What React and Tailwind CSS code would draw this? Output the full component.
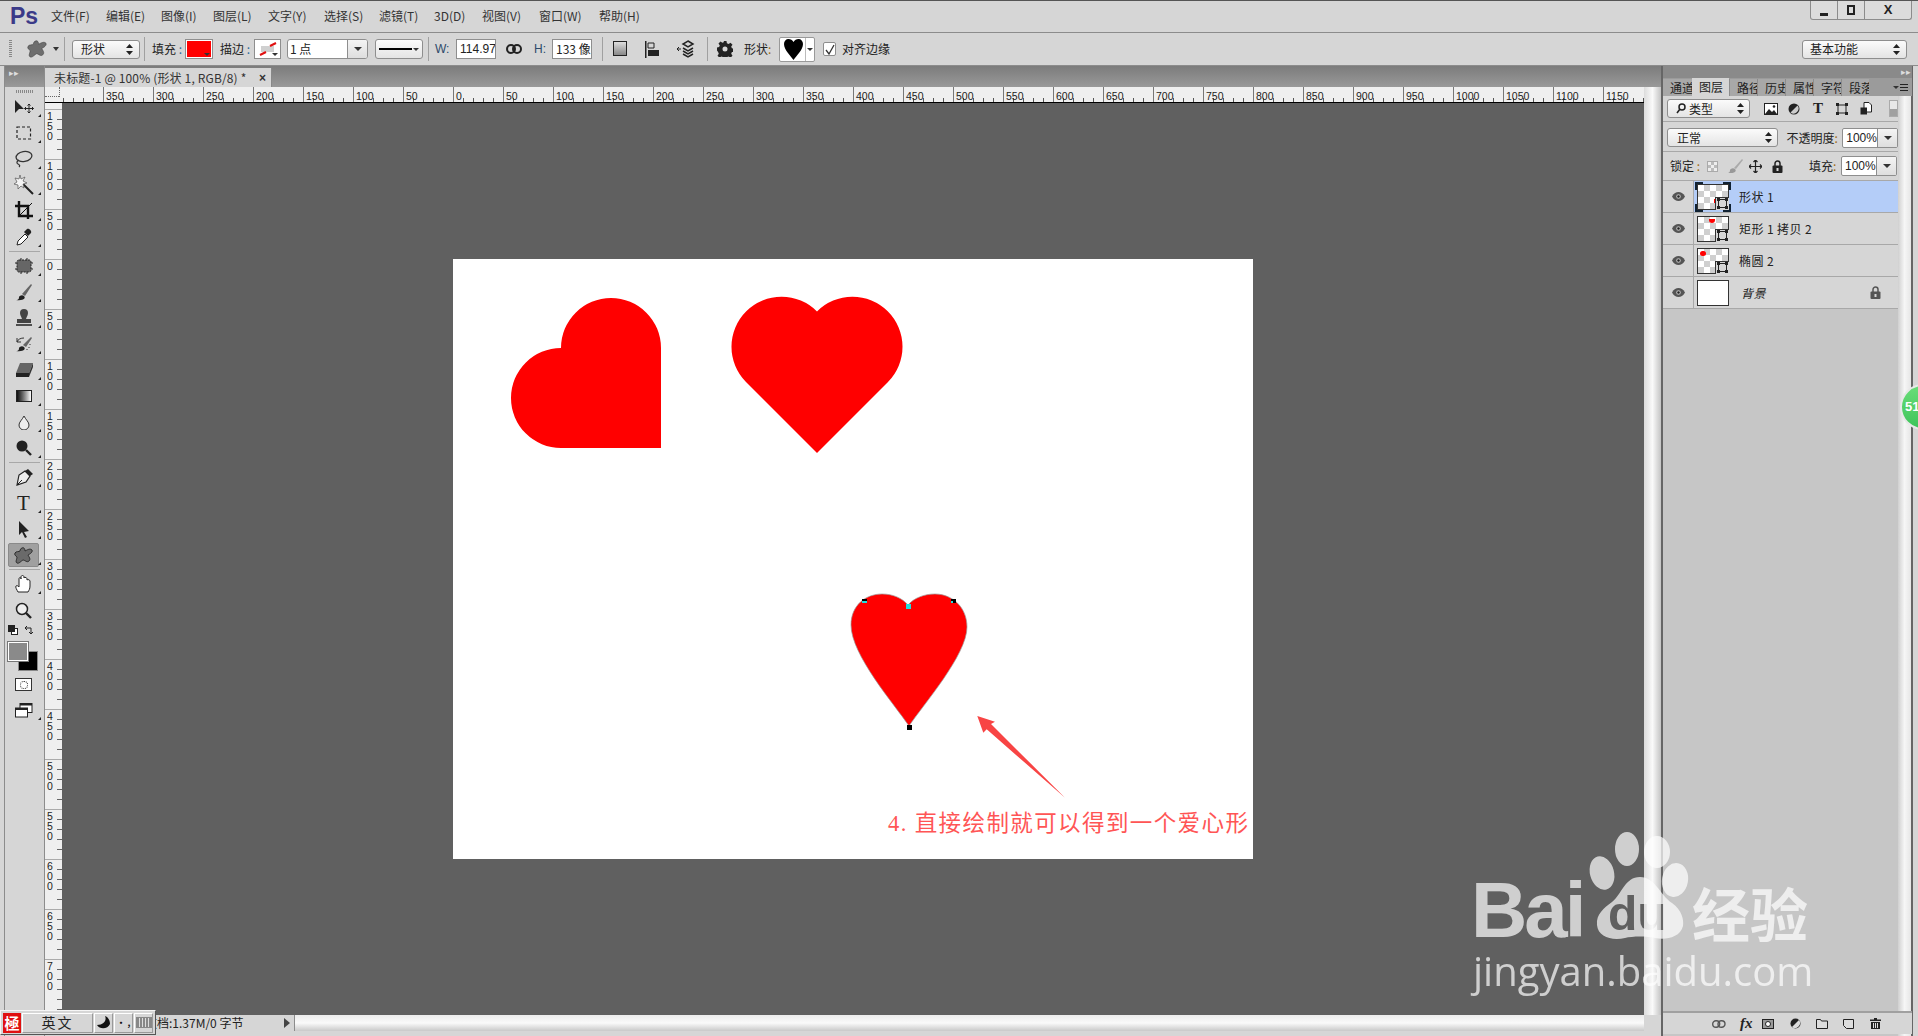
const cjk = "font-['Noto_Sans_CJK_SC','Noto_Sans',sans-serif]";

const menus = [
  ["文件(F)", "w-[55px]"],
  ["编辑(E)", "w-[55px]"],
  ["图像(I)", "w-[52px]"],
  ["图层(L)", "w-[55px]"],
  ["文字(Y)", "w-[56px]"],
  ["选择(S)", "w-[55px]"],
  ["滤镜(T)", "w-[55px]"],
  ["3D(D)", "w-[48px]"],
  ["视图(V)", "w-[57px]"],
  ["窗口(W)", "w-[60px]"],
  ["帮助(H)", "w-[60px]"],
];

const shapePath =
  "M8 1C10 0 11 2 11 4C13 3 16 1 18 3C19 5 16 7 14 8C15 10 17 12 15 14C13 16 11 13 9 13C7 14 5 17 3 16C1 15 3 12 3 10C2 9 0 8 1 6C2 4 5 5 6 4C6 3 7 1 8 1Z";

function Caret({ className = "" }) {
  return <div className={`w-0 h-0 border-l-[3px] border-r-[3px] border-t-[3px] border-l-transparent border-r-transparent border-t-[#333] ${className}`} />;
}

function Sep() {
  return <div className="w-px h-[24px] bg-[#a0a0a0]" />;
}

function UpDown() {
  return (
    <svg width="7" height="11" viewBox="0 0 7 11" fill="#222">
      <path d="M3.500 0 7 4H0zM3.500 11 0 7h7z" />
    </svg>
  );
}

function Select({ label, className = "", pad = "pl-[8px]" }) {
  return (
    <div className={`h-[19px] flex items-center justify-between ${pad} pr-[6px] rounded-[3px] border border-[#8e8e8e] bg-gradient-to-b from-[#fbfbfb] to-[#e4e4e4] text-[12px] text-[#222] ${className}`}>
      <span>{label}</span>
      <UpDown />
    </div>
  );
}

function Field({ value, className = "" }) {
  return <div className={`h-[20px] flex items-center px-[3px] bg-white border border-[#8e8e8e] text-[12px] text-[#222] overflow-hidden whitespace-nowrap ${className}`}>{value}</div>;
}

function TitleBar() {
  return (
    <div className="h-[33px] shrink-0 flex items-start border-t border-t-[#555] border-b border-b-[#8c8c8c] bg-[#d6d6d6] relative">
      <div className="ml-[10px] mt-[1px] w-[41px] font-['Liberation_Sans',sans-serif] font-bold text-[23px] leading-[28px] text-[#3b3a88]">Ps</div>
      <div className="flex mt-[6px] text-[12px] leading-[18px] text-[#333]">
        {menus.map(([label, w]) => (
          <div key={label} className={w}>{label}</div>
        ))}
      </div>
      <div className="ml-auto mr-[6px] w-[102px] h-[19px] flex border border-t-0 border-[#8c8c8c] rounded-b-[3px] bg-[#dcdcdc]">
        <div className="w-[27px] flex items-end justify-center pb-[3px] border-r border-[#8c8c8c]">
          <div className="w-[8px] h-[3px] bg-[#222]" />
        </div>
        <div className="w-[27px] flex items-center justify-center border-r border-[#8c8c8c]">
          <div className="w-[8px] h-[10px] border-2 border-[#222]" />
        </div>
        <div className="flex-1 flex items-center justify-center font-['Liberation_Sans',sans-serif] font-bold text-[13px] text-[#222]">X</div>
      </div>
    </div>
  );
}

function OptionsBar() {
  return (
    <div className="h-[33px] shrink-0 flex items-center border-b border-[#8c8c8c] bg-[#d6d6d6] text-[12px] text-[#222]">
      <div className="ml-[9px] w-[3px] h-[18px] bg-[repeating-linear-gradient(to_bottom,#888_0,#888_1px,transparent_1px,transparent_2px)]" />
      <svg className="ml-[15px]" width="20" height="18" viewBox="0 0 19 17" fill="#6e6e6e" stroke="#444" strokeWidth=".6">
        <path d={shapePath} />
      </svg>
      <Caret className="ml-[6px] !border-t-[4px]" />
      <div className="ml-[5px]"><Sep /></div>
      <Select label="形状" className="ml-[7px] w-[68px]" />
      <div className="ml-[4px]"><Sep /></div>
      <div className="ml-[7px] w-[32px]">填充<span className="text-[#2b6a9a]"> :</span></div>
      <div className="ml-[1px] w-[28px] h-[20px] p-[1px] bg-white border border-[#8e8e8e] relative">
        <div className="w-full h-full bg-[#ff0000]" />
        <Caret className="absolute right-[2px] bottom-[2px]" />
      </div>
      <div className="ml-[7px] w-[33px]">描边<span className="text-[#2b6a9a]"> :</span></div>
      <div className="ml-[1px] w-[27px] h-[20px] bg-white border border-[#8e8e8e] relative flex items-center justify-center">
        <svg width="20" height="14" viewBox="0 0 20 14">
          <rect x="3" y="4" width="13" height="6" fill="#d0d0d0" />
          <path d="M2 13 8 10M12 4l6-3" stroke="#e01010" strokeWidth="2" />
        </svg>
        <Caret className="absolute right-[2px] bottom-[2px]" />
      </div>
      <div className="ml-[6px] w-[81px] h-[20px] flex rounded-[3px] border border-[#8e8e8e] bg-white overflow-hidden">
        <div className="flex-1 flex items-center pl-[2px]">1 点</div>
        <div className="w-[20px] flex items-center justify-center border-l border-[#8e8e8e] bg-gradient-to-b from-[#f4f4f4] to-[#dedede]">
          <Caret className="!border-l-[4px] !border-r-[4px] !border-t-[4px]" />
        </div>
      </div>
      <div className="ml-[7px] w-[48px] h-[20px] flex items-center justify-between px-[3px] rounded-[3px] border border-[#8e8e8e] bg-gradient-to-b from-[#fbfbfb] to-[#e4e4e4]">
        <div className="w-[33px] h-[2px] bg-black" />
        <Caret />
      </div>
      <div className="ml-[5px]"><Sep /></div>
      <div className="ml-[6px] w-[21px] font-['Liberation_Sans',sans-serif] text-[#2d4a6a]">W:</div>
      <Field value="114.97" className="w-[40px] font-['Liberation_Sans',sans-serif]" />
      <svg className="ml-[10px]" width="16" height="10" viewBox="0 0 16 10" fill="none" stroke="#222" strokeWidth="2">
        <rect x="1" y="1" width="8" height="8" rx="4" />
        <rect x="7" y="1" width="8" height="8" rx="4" />
      </svg>
      <div className="ml-[12px] w-[18px] font-['Liberation_Sans',sans-serif] text-[#2d4a6a]">H:</div>
      <Field value="133 像素" className="w-[40px]" />
      <div className="ml-[10px]"><Sep /></div>
      <div className="ml-[10px] w-[14px] h-[15px] border border-[#222] bg-gradient-to-b from-[#ddd] to-[#888] mb-[2px]" />
      <svg className="ml-[18px]" width="15" height="17" viewBox="0 0 15 17" fill="#222">
        <path d="M0 0h1.500v17H0z" />
        <path d="M3 2h6v5H3z" fill="none" stroke="#222" />
        <path d="M3 9h11v6H3z" />
      </svg>
      <svg className="ml-[15px]" width="20" height="18" viewBox="0 0 20 18" fill="none" stroke="#222" strokeWidth="1.500">
        <path d="M2 9h4M4 7 2 9l2 2" strokeWidth="1" />
        <path d="m13 1 5 3-5 3-5-3zM8 8l5 3 5-3M8 11l5 3 5-3M8 14l5 3 5-3" />
      </svg>
      <div className="ml-[12px]"><Sep /></div>
      <svg className="ml-[9px]" width="16" height="16" viewBox="0 0 16 16" fill="#222">
        <path fillRule="evenodd" d="M6.500 0h3l.4 2.300 1.700.7 1.900-1.300 2 2-1.300 1.900.7 1.700 2.100.4v3l-2.100.4-.7 1.700 1.300 1.900-2 2-1.900-1.300-1.700.7-.4 2.300h-3l-.4-2.300-1.700-.7-1.900 1.300-2-2 1.300-1.900-.7-1.700L0 9.500v-3l2.100-.4.7-1.700L1.500 2.500l2-2 1.900 1.300 1.700-.7zM8 5.500a2.500 2.500 0 1 0 0 5 2.500 2.500 0 0 0 0-5z" />
      </svg>
      <div className="ml-[11px] w-[35px]">形状<span className="text-[#a06a10]">:</span></div>
      <div className="w-[36px] h-[25px] flex items-center rounded-[2px] border border-[#999] bg-white relative">
        <svg className="ml-[4px]" width="19" height="21" viewBox="0 0 19 21" fill="#000">
          <path d="M9.500 21C7 17 0 11 0 5c0-3 2-5 4.500-5 2 0 4 1 5 3 1-2 3-3 5-3C17 0 19 2 19 5c0 6-7 12-9.500 16z" />
        </svg>
        <div className="absolute right-0 top-0 bottom-0 w-[9px] flex items-center justify-center border-l border-[#bbb]">
          <Caret />
        </div>
      </div>
      <div className="ml-[8px] w-[13px] h-[14px] rounded-[2px] border border-[#8e8e8e] bg-white flex items-center justify-center">
        <svg width="10" height="11" viewBox="0 0 10 11" fill="none" stroke="#333" strokeWidth="1.300"><path d="M1 6l3 4 5-9" /></svg>
      </div>
      <div className="ml-[6px]">对齐边缘</div>
      <Select label="基本功能" pad="pl-[7px]" className="ml-auto mr-[11px] w-[105px]" />
    </div>
  );
}

function Tool({ children, corner = true, active = false }) {
  return (
    <div className="h-[26px] flex items-center justify-center pr-[2px] relative">
      {active && <div className="absolute left-[3px] top-[1px] w-[31px] h-[24px] rounded-[2px] bg-[#a0a0a0] border border-[#8a8a8a]" />}
      <div className="relative flex items-center justify-center">{children}</div>
      {corner && <div className="absolute right-[3px] bottom-[3px] w-0 h-0 border-l-[3px] border-l-transparent border-b-[3px] border-b-[#222]" />}
    </div>
  );
}

function ToolDivider() {
  return (
    <div className="h-[3px] flex items-center px-[4px]">
      <div className="w-full h-px bg-[#a8a8a8]" />
    </div>
  );
}

function Icon({ w = 20, h = 20, children, ...rest }) {
  return (
    <svg width={w} height={h} viewBox={`0 0 ${w} ${h}`} {...rest}>
      {children}
    </svg>
  );
}

function ToolBar() {
  return (
    <div className="w-[41px] ml-[4px] shrink-0 flex flex-col border-x border-[#8c8c8c] bg-[#d6d6d6]">
      <div className="h-[21px] bg-gradient-to-b from-[#7c7c7c] to-[#999] text-[#ddd] text-[9px] leading-[14px] pl-[4px] font-['Liberation_Sans',sans-serif]">▸▸</div>
      <div className="h-[7px] flex justify-center pt-[3px]">
        <div className="w-[18px] h-[3px] bg-[repeating-linear-gradient(to_right,#888_0,#888_1px,transparent_1px,transparent_2px)]" />
      </div>
      <Tool>
        <Icon w={24} h={16}>
          <path d="M3 1v13l4-4 5 0z" fill="#222" />
          <path d="M17 5v9M12.500 9.500h9M15.500 6.500 17 5l1.500 1.500M15.500 12.500 17 14l1.500-1.500M14 8l-1.500 1.500L14 11M20 8l1.500 1.500L20 11" fill="none" stroke="#222" />
        </Icon>
      </Tool>
      <Tool>
        <Icon w={16} h={14}>
          <rect x="1" y="1" width="13.500" height="12" fill="none" stroke="#222" strokeWidth="1.200" strokeDasharray="3 2" />
        </Icon>
      </Tool>
      <Tool>
        <Icon w={19} h={18} fill="none" stroke="#333" strokeWidth="1.300">
          <ellipse cx="10" cy="6.500" rx="8" ry="5" transform="rotate(-10 10 6.500)" />
          <path d="M5 10c-2 1-3 3-1 4s2 2 1 3" />
        </Icon>
      </Tool>
      <Tool>
        <Icon w={20} h={20}>
          <path d="M9 9l10 10" stroke="#222" strokeWidth="2" />
          <path d="M6 0l1 4 4-2-2 4 4 2-4 1 1 4-3-2-3 3 0-4-4-1 3-2-2-4 4 1z" fill="#f4f4f4" stroke="#555" strokeWidth=".7" />
        </Icon>
      </Tool>
      <Tool>
        <Icon w={20} h={20} fill="none" stroke="#111">
          <path d="M1 5h13v13M5 0v15h14" strokeWidth="2.400" />
          <path d="M6 14 18 2" strokeWidth="1" />
        </Icon>
      </Tool>
      <Tool>
        <Icon w={16} h={18}>
          <path d="M1 17l1-4 7-7 3 3-7 7z" fill="#fff" stroke="#222" />
          <path d="M8 4l4 4 3-3c1-2-2-5-4-4z" fill="#222" />
        </Icon>
      </Tool>
      <ToolDivider />
      <Tool>
        <Icon w={18} h={16}>
          <rect x="2" y="2" width="14" height="12" rx="2" fill="#666" stroke="#222" strokeDasharray="2 1" />
          <path d="M0 5h2M0 11h2M16 5h2M16 11h2M6 0v2M12 0v2M6 14v2M12 14v2" stroke="#222" />
        </Icon>
      </Tool>
      <Tool>
        <Icon w={18} h={18}>
          <path d="M7 11 16 1l1 1-7 11z" fill="#666" />
          <path d="M1 17c3 0 3-2 3-3s3-3 5-1 0 5-8 4z" fill="#222" />
        </Icon>
      </Tool>
      <Tool>
        <Icon w={16} h={18}>
          <path d="M6 10c-1-3-2-4-2-6a4 4 0 0 1 8 0c0 2-1 3-2 6z" fill="#444" />
          <path d="M1 10h14v4H1z" fill="#444" />
          <path d="M0 16h16" stroke="#222" strokeWidth="1.500" />
        </Icon>
      </Tool>
      <Tool>
        <Icon w={18} h={16}>
          <path d="M8 9 16 1l1 1-6 9z" fill="#666" />
          <path d="M1 15c3 0 3-2 3-3s3-3 5-1 0 5-8 4z" fill="#222" />
          <path d="M2 6c1-3 4-4 7-4M2 2v4h4" fill="none" stroke="#333" />
          <path d="M15 8v1M14 11v1M12 13v1" stroke="#333" />
        </Icon>
      </Tool>
      <Tool>
        <Icon w={18} h={14}>
          <path d="M5 0h13l-4 10H1z" fill="#666" />
          <path d="M1 10h13v4H1z" fill="#222" />
          <path d="M14 10l4-10v4l-4 10z" fill="#333" />
        </Icon>
      </Tool>
      <Tool>
        <div className="w-[16px] h-[12px] border border-[#222] bg-gradient-to-r from-[#111] to-[#fff]" />
      </Tool>
      <Tool>
        <Icon w={12} h={15}>
          <path d="M6 1C4 5 1 7 1 10a5 5 0 0 0 10 0c0-3-3-5-5-9z" fill="#eee" stroke="#333" />
        </Icon>
      </Tool>
      <Tool>
        <Icon w={16} h={16}>
          <circle cx="6" cy="6" r="5.500" fill="#222" />
          <path d="M10 10l5 5" stroke="#222" strokeWidth="2.400" />
        </Icon>
      </Tool>
      <ToolDivider />
      <Tool>
        <Icon w={18} h={17}>
          <path d="M2 16 4 6l6-4 5 5-4 6z" fill="#eee" stroke="#222" strokeWidth="1.200" />
          <path d="M10 2l3-2 5 5-3 2z" fill="#222" />
          <path d="M2 16l5-5" stroke="#222" />
        </Icon>
      </Tool>
      <Tool>
        <div className="font-['Liberation_Serif',serif] text-[21px] leading-[20px] text-[#222]">T</div>
      </Tool>
      <Tool>
        <Icon w={12} h={17}>
          <path d="M1 0v14l3-3 3 6 2-1-3-5 5-1z" fill="#222" />
        </Icon>
      </Tool>
      <Tool active>
        <svg width="19" height="17" viewBox="0 0 19 17" fill="#6a6a6a" stroke="#222" strokeWidth=".9">
          <path d={shapePath} />
        </svg>
      </Tool>
      <ToolDivider />
      <Tool>
        <Icon w={18} h={18}>
          <path d="M3 17c-1-2-3-5-2-6s2 0 3 1V4c0-2 2-2 2 0V2c0-2 3-2 3 0v1c0-1 3-1 3 1v1c1-1 3 0 3 1v5c0 3-1 4-2 6z" fill="#fff" stroke="#222" />
        </Icon>
      </Tool>
      <Tool corner={false}>
        <Icon w={17} h={17}>
          <circle cx="7" cy="7" r="5.500" fill="#eee" stroke="#222" strokeWidth="1.500" />
          <path d="M11 11l5 5" stroke="#222" strokeWidth="2.400" />
        </Icon>
      </Tool>
      <div className="h-[14px] flex justify-between items-center pl-[3px] pr-[10px]">
        <div className="relative w-[10px] h-[10px]">
          <div className="absolute right-0 bottom-0 w-[7px] h-[7px] bg-white border border-[#222]" />
          <div className="absolute left-0 top-0 w-[7px] h-[7px] bg-[#222]" />
        </div>
        <Icon w={10} h={10} fill="none" stroke="#222">
          <path d="M1 3h6v6M1 3l2-2M1 3l2 2M7 9l-2-2M7 9l2-2" />
        </Icon>
      </div>
      <div className="mt-[5px] h-[28px] relative">
        <div className="absolute left-[13px] top-[9px] w-[20px] h-[20px] bg-black border border-[#888]" />
        <div className="absolute left-[3px] top-0 w-[20px] h-[19px] bg-[#8a8a8a] border border-white outline outline-[#777]" />
      </div>
      <div className="mt-[8px] flex justify-center pr-[2px]">
        <div className="w-[17px] h-[13px] bg-white border border-[#333] flex items-center justify-center">
          <div className="w-[8px] h-[8px] rounded-full border border-dotted border-[#222]" />
        </div>
      </div>
      <div className="mt-[12px] h-[18px] flex justify-center pr-[2px] relative">
        <Icon w={18} h={15}>
          <rect x="5" y="0.500" width="12" height="9" fill="#fff" stroke="#222" />
          <path d="M5 0.500h12v2H5z" fill="#222" />
          <rect x="0.500" y="5" width="12" height="9" fill="#fff" stroke="#222" />
          <path d="M0.500 5h12v2H.5z" fill="#222" />
        </Icon>
        <div className="absolute right-[3px] bottom-[1px] w-0 h-0 border-l-[3px] border-l-transparent border-b-[3px] border-b-[#222]" />
      </div>
    </div>
  );
}

function HRuler() {
  const labels = [350, 300, 250, 200, 150, 100, 50, 0, 50, 100, 150, 200, 250, 300, 350, 400, 450, 500, 550, 600, 650, 700, 750, 800, 850, 900, 950, 1000, 1050, 1100, 1150];
  const ticks = [];
  for (let x = 1; x < 1582; x += 10) ticks.push(x);
  return (
    <svg width="1582" height="15" className="block">
      <rect width="1582" height="15" fill="#efefef" />
      {ticks.map((x) => (
        <line key={x} x1={x + 0.5} x2={x + 0.5} y1="11" y2="15" stroke="#555" />
      ))}
      {labels.map((v, i) => (
        <g key={i}>
          <line x1={41.5 + i * 50} x2={41.5 + i * 50} y1="0" y2="15" stroke="#777" />
          <text x={44 + i * 50} y="12.500" fontFamily="Liberation Sans" fontSize="10.500" fill="#222">{v}</text>
        </g>
      ))}
    </svg>
  );
}

function VRuler() {
  const labels = ["150", "100", "50", "0", "50", "100", "150", "200", "250", "300", "350", "400", "450", "500", "550", "600", "650", "700"];
  const ticks = [];
  for (let y = 6; y < 912; y += 10) ticks.push(y);
  return (
    <svg width="17" height="912" className="block">
      <rect width="17" height="912" fill="#efefef" />
      {ticks.map((y) => (
        <line key={y} x1="12" x2="17" y1={y + 0.5} y2={y + 0.5} stroke="#666" />
      ))}
      {labels.map((v, i) => (
        <g key={i}>
          <line x1="0" x2="17" y1={6.5 + i * 50} y2={6.5 + i * 50} stroke="#aaa" />
          {v.split("").map((d, j) => (
            <text key={j} x="2" y={17 + i * 50 + j * 10} fontFamily="Liberation Sans" fontSize="10.500" fill="#222">{d}</text>
          ))}
        </g>
      ))}
    </svg>
  );
}

function DocArt() {
  return (
    <svg width="800" height="600" viewBox="453 259 800 600" className="block">
      <path d="M661 448H561a50 50 0 0 1 0-100a50 50 0 0 1 100 0z" fill="#ff0000" />
      <path d="M817 453 746 382a50 50 0 0 1 71-70.500a50 50 0 0 1 71 70.500z" fill="#ff0000" />
      <path d="M909 726C895 705 851 655 851 625C851 605 866 594 882 594C893 594 902 598 908 605C914 598 924 594 935 594C952 594 967 607 967 627C967 655 923 705 909 726Z" fill="#ff0000" stroke="#999" strokeWidth=".7" />
      <rect x="862" y="599" width="5" height="4" fill="#000" />
      <rect x="862" y="601" width="5" height="2" fill="#22dddd" />
      <rect x="906" y="604" width="5" height="5" fill="#22dddd" />
      <rect x="951" y="599" width="5" height="4" fill="#000" />
      <rect x="951" y="601" width="2" height="2" fill="#22dddd" />
      <rect x="907" y="725" width="5" height="5" fill="#000" />
      <path d="M977.300 716 995 721.700 991 724 1065 797.700 986.700 729.300 983.300 732.700Z" fill="#f84444" />
    </svg>
  );
}

function Canvas() {
  return (
    <div className="flex-1 min-h-0 flex">
      <VRuler />
      <div className="flex-1 bg-[#606060] overflow-hidden">
        <div className="ml-[391px] mt-[156px] w-[800px] h-[600px] bg-white relative">
          <DocArt />
          <span className="absolute left-[435px] top-[547px] whitespace-nowrap text-[22.500px] leading-[36px] tracking-[1.400px] text-[#ff5555] font-['Liberation_Serif','Noto_Sans_CJK_SC',serif]">
            4. 直接绘制就可以得到一个爱心形
          </span>
        </div>
      </div>
    </div>
  );
}

function Center() {
  return (
    <div className="w-[1616px] shrink-0 flex flex-col min-h-0">
      <div className="h-[21px] shrink-0 flex items-end bg-gradient-to-b from-[#7c7c7c] to-[#999]">
        <div className="w-[227px] h-[19px] flex items-center pl-[9px] bg-[#d6d6d6] text-[12px] text-[#333] border-r border-[#888] whitespace-nowrap">
          <span className="w-[205px] tracking-[0.150px]">未标题-1 @ 100% (形状 1, RGB/8) *</span>
          <span className="font-bold text-[12px] font-['Liberation_Sans',sans-serif]">×</span>
        </div>
      </div>
      <div className="flex-1 min-h-0 flex">
        <div className="w-[1599px] flex flex-col min-h-0">
          <div className="h-[16px] shrink-0 flex border-b border-b-black">
            <div className="w-[17px] h-[15px] bg-[#efefef] relative">
              <div className="absolute left-0 top-[9px] w-[14px] border-t border-dotted border-[#666]" />
              <div className="absolute left-[14px] top-0 h-[10px] border-l border-dotted border-[#666]" />
            </div>
            <HRuler />
          </div>
          <Canvas />
        </div>
        <div className="w-[17px] bg-gradient-to-r from-[#dcdcdc] via-[#fafafa] to-[#c4c4c4]" />
      </div>
      <div className="h-[21px] shrink-0 flex items-start">
        <div className="w-[250px] h-[16px] flex items-center justify-between pl-[100px] pr-[4px] bg-[#d6d6d6] border-r border-[#8c8c8c] text-[12px] leading-[16px] text-[#222] whitespace-nowrap">
          <span>文档:1.37M/0 字节</span>
          <div className="w-0 h-0 border-y-[5px] border-l-[6px] border-y-transparent border-l-[#444]" />
        </div>
        <div className="w-[1349px] h-[16px] bg-gradient-to-b from-[#ececec] via-[#fafafa] to-[#c9c9c9]" />
        <div className="w-[17px] h-[16px] bg-[#d6d6d6]" />
      </div>
    </div>
  );
}

const PANEL_TABS = ["路径", "历史", "属性", "字符", "段落"];

function LayerThumb({ dot, selected }) {
  return (
    <div className="w-[32px] h-[26px] border border-[#333] relative bg-[repeating-conic-gradient(#cfcfcf_0_25%,#fff_0_50%)] bg-[length:12px_12px]">
      {dot}
      <div className="absolute right-[-1px] bottom-[-1px] w-[14px] h-[13px] bg-[#d6d6d6] border-l border-t border-[#333] flex items-center justify-center">
        <div className="w-[9px] h-[9px] border border-[#222] relative">
          <div className="absolute -left-[2px] -top-[2px] w-[3px] h-[3px] bg-[#222]" />
          <div className="absolute -right-[2px] -top-[2px] w-[3px] h-[3px] bg-[#222]" />
          <div className="absolute -left-[2px] -bottom-[2px] w-[3px] h-[3px] bg-[#222]" />
          <div className="absolute -right-[2px] -bottom-[2px] w-[3px] h-[3px] bg-[#222]" />
        </div>
      </div>
      {selected && (
        <>
          <div className="absolute -left-[3px] -top-[3px] w-[8px] h-[8px] border-l-2 border-t-2 border-[#123]" />
          <div className="absolute -right-[3px] -top-[3px] w-[8px] h-[8px] border-r-2 border-t-2 border-[#123]" />
          <div className="absolute -left-[3px] -bottom-[3px] w-[8px] h-[8px] border-l-2 border-b-2 border-[#123]" />
          <div className="absolute -right-[3px] -bottom-[3px] w-[8px] h-[8px] border-r-2 border-b-2 border-[#123]" />
        </>
      )}
    </div>
  );
}

function Eye() {
  return (
    <svg width="13" height="9" viewBox="0 0 13 9">
      <path d="M0 4.500C2 1 4 0 6.500 0S11 1 13 4.500C11 8 9 9 6.500 9S2 8 0 4.500z" fill="#555" />
      <circle cx="6.500" cy="4.500" r="2.300" fill="#bbb" />
      <circle cx="6.500" cy="4.500" r="1.200" fill="#222" />
    </svg>
  );
}

function LockIcon({ fill = "#222", className = "" }) {
  return (
    <svg className={className} width="11" height="13" viewBox="0 0 11 13">
      <path d="M3 6V3.500a2.500 2.500 0 0 1 5 0V6" fill="none" stroke={fill} strokeWidth="1.500" />
      <rect x="0.500" y="5.500" width="10" height="7.500" rx="1" fill={fill} />
      <rect x="4.500" y="8" width="2" height="3" fill="#d6d6d6" />
    </svg>
  );
}

function LayerRow({ name, dot, selected, bg, italic }) {
  return (
    <div className={`h-[32px] shrink-0 flex items-center border-b border-[#a8a8a8] ${selected ? "bg-[#b4cdf8]" : "bg-[#d6d6d6]"}`}>
      <div className="w-[31px] h-full flex items-center justify-center bg-[#d6d6d6] border-r border-[#a8a8a8]">
        <Eye />
      </div>
      <div className="ml-[3px]">
        {bg ? <div className="w-[32px] h-[26px] border border-[#333] bg-white" /> : <LayerThumb dot={dot} selected={selected} />}
      </div>
      <div className={`ml-[10px] text-[12px] tracking-[0.400px] text-[#222] ${italic ? "italic ml-[12px]" : ""}`}>{name}</div>
      {bg && <LockIcon fill="#555" className="ml-auto mr-[17px]" />}
    </div>
  );
}

function Dropper() {
  return <div className="w-[20px] h-full flex items-center justify-center border-l border-[#8e8e8e] bg-gradient-to-b from-[#f4f4f4] to-[#dedede]"><Caret className="!border-l-[4px] !border-r-[4px] !border-t-[4px]" /></div>;
}

function Panel() {
  return (
    <div className="w-[252px] shrink-0 flex">
      <div className="w-[237px] shrink-0 flex flex-col border-l-2 border-[#666] bg-[#c6c6c6]">
        <div className="h-[12px] shrink-0 bg-[#8a8a8a] text-[#ddd] text-[9px] leading-[12px] text-right pr-[1px] font-['Liberation_Sans',sans-serif] -mr-[14px] relative">▸▸</div>
        <div className="h-[18px] shrink-0 flex items-end bg-[#9b9b9b] text-[12px] text-[#222] -mr-[14px] relative">
          <div className="w-[29px] h-[17px] pl-[7px] bg-[#a8a8a8] overflow-hidden whitespace-nowrap leading-[17px]">通道</div>
          <div className="w-[37px] h-[18px] pl-[7px] bg-[#d6d6d6] leading-[18px]">图层</div>
          {PANEL_TABS.map((t) => (
            <div key={t} className="w-[28px] h-[17px] pl-[7px] bg-[#a8a8a8] border-l border-[#8c8c8c] overflow-hidden whitespace-nowrap leading-[17px]">{t}</div>
          ))}
          <div className="ml-auto mr-[4px] mb-[5px] flex items-center gap-[1px]">
            <Caret />
            <div className="w-[8px] h-[7px] border-y border-[#222] flex items-center"><div className="w-full h-px bg-[#222]" /></div>
          </div>
        </div>
        <div className="h-[26px] shrink-0 flex items-center bg-[#d6d6d6] border-b border-[#a8a8a8]">
          <div className="ml-[4px] w-[83px] h-[19px] flex items-center justify-between pl-[8px] pr-[5px] rounded-[3px] border border-[#8e8e8e] bg-gradient-to-b from-[#fbfbfb] to-[#e4e4e4] text-[12px] text-[#222]">
            <span className="flex items-center gap-[3px]">
              <svg width="10" height="11" viewBox="0 0 10 11" fill="none" stroke="#222" strokeWidth="1.500"><circle cx="6" cy="4" r="3" /><path d="M4 6 1 10" /></svg>
              类型
            </span>
            <UpDown />
          </div>
          <svg className="ml-[14px]" width="14" height="12" viewBox="0 0 14 12"><rect x=".5" y=".5" width="13" height="11" fill="#fff" stroke="#222" /><path d="M1 11l4-5 3 3 2-2 3 4z" fill="#222" /><circle cx="10" cy="3.500" r="1.300" fill="#222" /></svg>
          <svg className="ml-[10px]" width="12" height="12" viewBox="0 0 12 12"><circle cx="6" cy="6" r="5.500" fill="#222" /><path d="M9.500 2.500a5 5 0 0 1-7 7z" fill="#ccc" /></svg>
          <div className="ml-[13px] w-[12px] font-['Liberation_Serif',serif] font-bold text-[15px] leading-[15px] text-[#222]">T</div>
          <svg className="ml-[11px]" width="12" height="12" viewBox="0 0 12 12" fill="#222"><path d="M2 2h8v8H2z" fill="none" stroke="#222" /><path d="M0 0h3v3H0zM9 0h3v3H9zM0 9h3v3H0zM9 9h3v3H9z" /></svg>
          <svg className="ml-[12px]" width="12" height="13" viewBox="0 0 12 13"><path d="M4 .5h5l2.500 2.500v7H4z" fill="#fff" stroke="#222" /><rect x="0.500" y="5.500" width="6.500" height="7" fill="#222" /></svg>
          <div className="ml-[17px] w-[9px] h-[17px] border border-[#aaa] flex flex-col">
            <div className="h-1/2 bg-[#e8e8e8]" />
            <div className="h-1/2 bg-[#a0a0a0]" />
          </div>
        </div>
        <div className="h-[30px] shrink-0 flex items-center pt-[2px] bg-[#d6d6d6] text-[12px] text-[#222] border-b border-[#a8a8a8]">
          <div className="ml-[4px] w-[111px] h-[19px] flex items-center justify-between pl-[9px] pr-[5px] rounded-[3px] border border-[#8e8e8e] bg-gradient-to-b from-[#fbfbfb] to-[#e4e4e4]">
            <span>正常</span>
            <UpDown />
          </div>
          <div className="ml-[9px] w-[56px] whitespace-nowrap">不透明度<span className="text-[#a06a10]">:</span></div>
          <div className="w-[56px] h-[20px] flex rounded-[2px] border border-[#8e8e8e] bg-white overflow-hidden">
            <div className="flex-1 flex items-center pl-[3px] font-['Liberation_Sans',sans-serif]">100%</div>
            <Dropper />
          </div>
        </div>
        <div className="h-[29px] shrink-0 flex items-center bg-[#d6d6d6] text-[12px] text-[#222] border-b border-[#a8a8a8]">
          <div className="ml-[7px] w-[33px] whitespace-nowrap">锁定<span className="text-[#a06a10]"> :</span></div>
          <div className="ml-[4px] w-[11px] h-[11px] border border-[#aaa] bg-[repeating-conic-gradient(#bbb_0_25%,#eee_0_50%)] bg-[length:6px_6px]" />
          <svg className="ml-[9px]" width="16" height="14" viewBox="0 0 16 14"><path d="M7 9l8-9 1 1-7 9z" fill="#aaa" /><path d="M0 14c3 0 3-2 3-3s3-3 5-1 0 5-8 4z" fill="#999" /></svg>
          <svg className="ml-[6px]" width="13" height="13" viewBox="0 0 13 13" fill="none" stroke="#222" strokeWidth="1.200"><path d="M6.500 0v13M0 6.500h13M4.500 2l2-2 2 2M4.500 11l2 2 2-2M2 4.500l-2 2 2 2M11 4.500l2 2-2 2" /></svg>
          <LockIcon className="ml-[10px]" />
          <div className="ml-[26px] w-[32px] whitespace-nowrap">填充<span className="text-[#a06a10]">:</span></div>
          <div className="w-[56px] h-[20px] flex rounded-[2px] border border-[#8e8e8e] bg-white overflow-hidden">
            <div className="flex-1 flex items-center pl-[3px] font-['Liberation_Sans',sans-serif]">100%</div>
            <Dropper />
          </div>
        </div>
        <LayerRow name="形状 1" selected dot={<div className="absolute left-[16px] top-[14px] w-[3px] h-[4px] bg-[#ff0000]" />} />
        <LayerRow name="矩形 1 拷贝 2" dot={<div className="absolute left-[11px] top-[2px] w-[6px] h-[4px] rounded-b-full bg-[#ff0000]" />} />
        <LayerRow name="椭圆 2" dot={<div className="absolute left-[2px] top-[2px] w-[6px] h-[5px] rounded-full bg-[#ff0000]" />} />
        <LayerRow name="背景" bg italic />
        <div className="flex-1" />
        <div className="h-[23px] shrink-0 flex items-center border-t-2 border-[#a0a0a0] bg-[#d6d6d6] mb-[2px] -mr-[14px] relative">
          <svg className="ml-[49px]" width="14" height="8" viewBox="0 0 14 8" fill="none" stroke="#555" strokeWidth="1.400"><rect x=".7" y=".7" width="7" height="6.600" rx="3.300" /><rect x="6" y=".7" width="7" height="6.600" rx="3.300" /></svg>
          <div className="ml-[14px] w-[17px] font-['Liberation_Serif',serif] italic font-bold text-[15px] leading-[15px] text-[#222]">fx</div>
          <svg className="ml-[5px]" width="12" height="10" viewBox="0 0 12 10"><rect x=".5" y=".5" width="11" height="9" fill="#999" stroke="#222" /><circle cx="6" cy="5" r="2.500" fill="#fff" stroke="#222" /></svg>
          <svg className="ml-[16px]" width="11" height="11" viewBox="0 0 11 11"><circle cx="5.500" cy="5.500" r="5" fill="#222" /><path d="M9 2a5 5 0 0 1-7 7z" fill="#ddd" /></svg>
          <svg className="ml-[15px]" width="12" height="10" viewBox="0 0 12 10" fill="#ddd" stroke="#222"><path d="M.5 9.500v-9h4l1 1.500h6v7.500z" /></svg>
          <svg className="ml-[15px]" width="11" height="10" viewBox="0 0 11 10" fill="#ddd" stroke="#222"><path d="M.5.5h10v6l-3 3h-7z" transform="matrix(-1 0 0 1 11 0)" /></svg>
          <svg className="ml-[16px]" width="11" height="11" viewBox="0 0 11 11" fill="#222"><path d="M4 0h3v1.500h4V3H0V1.500h4zM1 4h9v7H1z" /><path d="M3.500 5v5M5.500 5v5M7.500 5v5" stroke="#ddd" /></svg>
        </div>
      </div>
      <div className="w-[15px] shrink-0 bg-gradient-to-r from-[#d0d0d0] via-[#f6f6f6] to-[#e6e6e6] border-r-2 border-[#666]" />
    </div>
  );
}

function ImeBar() {
  return (
    <div className={`absolute left-0 top-[1010px] w-[156px] h-[25px] flex items-center gap-px px-[2px] bg-[#d6d6d6] border border-t-[#f6f6f6] border-l-[#f6f6f6] border-b-[#555] border-r-[#555] z-10 ${cjk}`}>
      <div className="w-[18px] h-[20px] bg-[#e01010] text-white text-[15px] leading-[20px] text-center font-bold">極</div>
      <div className="w-[71px] h-[20px] flex items-center justify-center border border-[#999] border-t-white border-l-white text-[14px] tracking-[2px] text-[#222]">英文</div>
      <div className="w-[19px] h-[20px] flex items-center justify-center border border-[#999] border-t-white border-l-white">
        <svg width="13" height="13" viewBox="0 0 13 13"><path d="M8 0c2 4-1 9-8 9 3 5 11 4 13-1 0-4-2-7-5-8z" fill="#111" /></svg>
      </div>
      <div className="w-[19px] h-[20px] flex items-center justify-center border border-[#999] border-t-white border-l-white text-[9px] font-bold leading-[14px] text-[#111]">· ,</div>
      <div className="w-[19px] h-[20px] flex items-center justify-center border border-[#999] border-t-white border-l-white">
        <div className="w-[16px] h-[11px] bg-[repeating-linear-gradient(to_right,#888_0,#888_2px,#ddd_2px,#ddd_3px)] border border-[#888]" />
      </div>
    </div>
  );
}

function Watermark() {
  return (
    <div className="absolute left-[1470px] top-[825px] w-[350px] h-[173px] pointer-events-none opacity-70 text-white z-10">
      <span className="absolute left-[1px] top-[40px] font-['Liberation_Sans',sans-serif] font-bold text-[78px] leading-[90px] tracking-[-3px]">Bai</span>
      <svg className="absolute left-0 top-0" width="350" height="125" viewBox="1470 825 350 125">
        <mask id="du">
          <rect x="1470" y="825" width="350" height="125" fill="#fff" />
          <text x="1608" y="930" fontFamily="Liberation Sans" fontWeight="700" fontSize="48" fill="#000">du</text>
        </mask>
        <g fill="#fff">
          <ellipse cx="1627" cy="849" rx="12" ry="17" />
          <ellipse cx="1657" cy="852" rx="13" ry="16" />
          <ellipse cx="1602" cy="873" rx="12" ry="17" transform="rotate(-15 1602 873)" />
          <ellipse cx="1675" cy="880" rx="13" ry="17" transform="rotate(10 1675 880)" />
          <path mask="url(#du)" d="M1640 877C1655 877 1660 895 1672 903C1682 910 1684 920 1683 926C1680 938 1665 940 1655 938C1648 936 1632 936 1625 938C1612 941 1598 937 1597 925C1596 914 1604 908 1612 902C1622 894 1625 877 1640 877Z" />
        </g>
      </svg>
      <span className={`absolute left-[222px] top-[53px] text-[58px] leading-[68px] font-bold whitespace-nowrap ${cjk}`}>经验</span>
      <span className="absolute left-[3px] top-[121px] font-['Open_Sans',sans-serif] text-[40px] leading-[50px] whitespace-nowrap">jingyan.baidu.com</span>
    </div>
  );
}

export default function App() {
  return (
    <div className={`w-[1918px] h-[1036px] relative overflow-hidden flex flex-col bg-[#d6d6d6] ${cjk}`}>
      <TitleBar />
      <OptionsBar />
      <div className="flex-1 min-h-0 flex">
        <ToolBar />
        <Center />
        <Panel />
      </div>
      <ImeBar />
      <Watermark />
      <div className="absolute left-[1900px] top-[384px] w-[46px] h-[46px] rounded-full border-2 border-[#e8e8e8] bg-gradient-to-b from-[#69dd78] to-[#3cc45a] pl-[3px] font-['Liberation_Sans',sans-serif] font-bold text-[13px] leading-[42px] text-white">51</div>
    </div>
  );
}
